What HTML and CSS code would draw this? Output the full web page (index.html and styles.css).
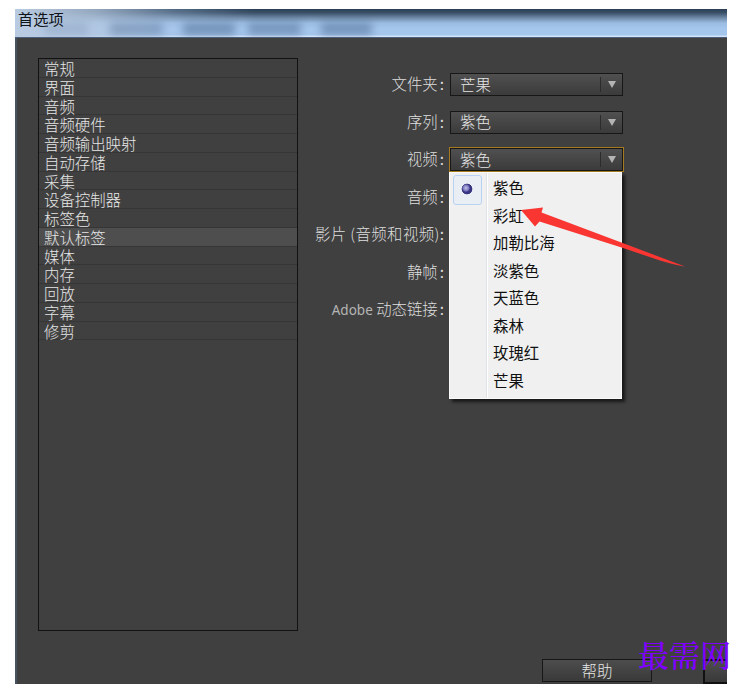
FILE: index.html
```html
<!DOCTYPE html>
<html lang="zh-CN">
<head>
<meta charset="utf-8">
<title>首选项</title>
<link rel="stylesheet" href="styles.css">
</head>
<body>
<main class="dialog">
  <header class="titlebar">
    <div class="ghosts" aria-hidden="true"><i class="g1"></i><i class="g2"></i><i class="g3"></i><i class="g4"></i><i class="g5"></i></div>
    <h1>首选项</h1>
  </header>
  <div class="content">
    <ul class="sections">
      <li>常规</li><li>界面</li><li>音频</li><li>音频硬件</li><li>音频输出映射</li>
      <li>自动存储</li><li>采集</li><li>设备控制器</li><li>标签色</li><li class="selected">默认标签</li>
      <li>媒体</li><li>内存</li><li>回放</li><li>字幕</li><li>修剪</li>
    </ul>
    <div class="form">
      <div class="row"><label>文件夹<b>:</b></label><div class="select"><span>芒果</span><i></i></div></div>
      <div class="row"><label>序列<b>:</b></label><div class="select"><span>紫色</span><i></i></div></div>
      <div class="row"><label>视频<b>:</b></label>
        <div class="select open"><span>紫色</span><i></i>
          <ul class="menu">
            <li class="checked">紫色</li><li>彩虹</li><li>加勒比海</li><li>淡紫色</li><li>天蓝色</li><li>森林</li><li>玫瑰红</li><li>芒果</li>
          </ul>
        </div>
      </div>
      <div class="row"><label>音频<b>:</b></label></div>
      <div class="row"><label class="wide">影片 (音频和视频)<b>:</b></label></div>
      <div class="row"><label>静帧<b>:</b></label></div>
      <div class="row"><label><span class="latin">Adobe</span> 动态链接<b>:</b></label></div>
    </div>
  </div>
  <footer class="buttons"><div class="button">帮助</div><div class="button default"></div></footer>
</main>
<svg class="arrow" width="168" height="64" viewBox="0 0 168 64" aria-hidden="true">
  <path d="M2 6 L24 3.5 L22.500 8.500 L101 38 L166 62.500 Q158 61.500 141 56.500 L101 43 L20.500 17.500 L16 22.500 Z" fill="#fa3633"/>
</svg>
<div class="watermark">最需网</div>
</body>
</html>
```
FILE: styles.css
```css
* { box-sizing: border-box; }
body {
  margin: 0;
  width: 750px;
  height: 687px;
  padding: 9px 0 0 15px;
  overflow: hidden;
  background: #fff;
  font: 300 15.4px/18.75px "Noto Sans CJK SC", sans-serif;
  color: #e6e6e6;
}
ul { list-style: none; margin: 0; padding: 0; }
.dialog {
  width: 712px;
  height: 675px;
  display: flex;
  flex-direction: column;
  overflow: hidden;
  background: #404040;
}
.titlebar {
  position: relative;
  height: 29px;
  flex: none;
  border-bottom: 1px solid #4b607c;
  background:
    linear-gradient(90deg, #b9cbe1 0, #b5c8e0c0 80px, #a9c4e650 160px, #a9c4e600 240px),
    linear-gradient(#293f56 0, #3c5269 4px, #708ba9 9px, #9bbce1 14px, #a5c7ee 20px, #a4c5ec 26px, #d3e4fa 27px);
}
h1 {
  position: relative;
  margin: 0;
  padding-left: 3px;
  font-size: 15.2px;
  line-height: 18px;
  font-weight: 400;
  color: #101318;
}
.ghosts { position: absolute; inset: 0; overflow: hidden; }
.ghosts i { position: absolute; top: 14px; height: 12px; background: #28446b; filter: blur(4px); opacity: .3; }
.ghosts .g1 { left: 29px; width: 44px; opacity: .15; }
.ghosts .g2 { left: 95px; width: 53px; }
.ghosts .g3 { left: 168px; width: 52px; opacity: .4; }
.ghosts .g4 { left: 233px; width: 53px; opacity: .38; }
.ghosts .g5 { left: 306px; width: 51px; opacity: .4; }
.content {
  display: flex;
  flex: none;
  height: 593px;
  padding: 20px 0 0 21px;
  border-left: 2px solid #46525f;
}
.sections {
  width: 260px;
  height: 573px;
  flex: none;
  border: 1px solid #121212;
}
.sections li {
  height: 18.75px;
  padding-left: 5px;
  border-bottom: 1px solid #363636;
}
.sections .selected { background: #4e4e4e; }
.form { width: 326px; padding-top: 8px; }
.row { height: 37.5px; display: flex; align-items: center; }
label { width: 146px; padding-bottom: 2px; text-align: right; white-space: nowrap; color: #dedede; }
label b { font-weight: 400; padding-left: 2px; }
.wide { letter-spacing: .4px; }
.wide b { padding-left: 0; letter-spacing: 0; }
.latin { font: 13.5px "Noto Sans", sans-serif; color: #b5b5b5; }
.select {
  position: relative;
  width: 173px;
  height: 23px;
  margin-left: 6px;
  border: 1px solid #171717;
  display: flex;
  align-items: center;
  justify-content: space-between;
  padding-left: 9px;
  background: linear-gradient(#505050, #3b3b3b);
}
.select > span { padding-bottom: 1px; }
.select > i { width: 22px; height: 15px; border-left: 1px solid #2c2c2c; display: flex; align-items: center; justify-content: center; }
.select > i::before { content: ""; border: 4.5px solid transparent; border-top: 7px solid #b4b4b4; border-bottom: 0; }
.open { box-shadow: 0 0 0 1px #a67b20; }
.menu {
  position: absolute;
  left: -2px;
  top: 23px;
  width: 173px;
  height: 227px;
  padding: 1px 0;
  border: 1px solid #fafafa;
  background: linear-gradient(90deg, #f0f0f0 36px, #dfe3e6 36px, #dfe3e6 37px, #fff 37px, #fff 38px, #f0f0f0 38px);
  box-shadow: 3px 3px 3px #181818;
}
.menu li {
  position: relative;
  height: 27.5px;
  padding-left: 43px;
  line-height: 27.5px;
  font-weight: 400;
  color: #111;
}
.checked::before {
  content: "";
  position: absolute;
  left: 3px;
  top: 1px;
  width: 27px;
  height: 28px;
  border: 1px solid #b9d2f3;
  border-radius: 3px;
  background: radial-gradient(circle at 12px 12px, #c3c4e8 0, #7774bc 3px, transparent 4px), radial-gradient(circle at 13px 13px, #383682 5px, transparent 5.7px), #e9eef5;
}
.buttons {
  display: flex;
  gap: 51px;
  height: 54px;
  padding: 28px 0 0 525px;
  border-left: 2px solid #46525f;
}
.button {
  width: 110px;
  height: 23px;
  flex: none;
  border: 1px solid #171717;
  text-align: center;
  line-height: 20px;
  background: linear-gradient(#4d4d4d, #393939);
}
.default { border: 2px solid #111; height: 25px; }
.arrow { position: absolute; left: 519px; top: 204px; }
.watermark {
  position: absolute;
  left: 638px;
  top: 634px;
  font: 500 31px/40px "Noto Serif CJK SC", SimSun, "Noto Sans CJK SC", serif;
  color: #8000ff;
}
```
